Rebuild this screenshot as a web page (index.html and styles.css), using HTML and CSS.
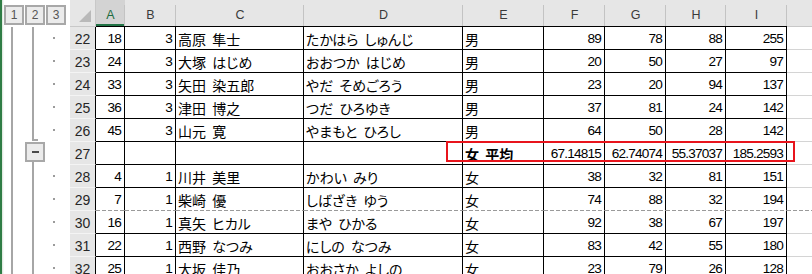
FILE: index.html
```html
<!DOCTYPE html>
<html lang="ja">
<head>
<meta charset="utf-8">
<title>Sheet</title>
<link rel="stylesheet" href="styles.css">
</head>
<body>
<div class="screen">
  <div class="outline">
    <div class="strip"></div>
    <div class="ocol">
      <div class="ohead"><span class="obtn">1</span></div>
      <div class="vline"></div>
    </div>
    <div class="ocol">
      <div class="ohead"><span class="obtn">2</span></div>
      <div class="seg-end"></div>
      <span class="obtn minus"><i></i></span>
      <div class="vline"></div>
    </div>
    <div class="ocol">
      <div class="ohead"><span class="obtn">3</span></div>
      <div class="dots">
        <span class="dot"></span><span class="dot"></span><span class="dot"></span><span class="dot"></span><span class="dot"></span>
        <span class="dot none"></span>
        <span class="dot"></span><span class="dot"></span><span class="dot"></span><span class="dot"></span><span class="dot"></span>
      </div>
    </div>
  </div>

  <div class="sheet">
    <div class="grid">
      <div class="row">
        <div class="corner"><span class="tri"></span></div>
        <div class="ch sel">A</div><div class="ch">B</div><div class="ch">C</div><div class="ch">D</div><div class="ch">E</div><div class="ch">F</div><div class="ch">G</div><div class="ch">H</div><div class="ch">I</div><div class="ch last"></div>
      </div>

      <div class="row">
        <div class="rh">22</div>
        <div class="c n">18</div><div class="c n">3</div><div class="c j">高原 隼士</div><div class="c j">たかはら しゅんじ</div><div class="c j">男</div><div class="c n">89</div><div class="c n">78</div><div class="c n">88</div><div class="c n">255</div><div class="x"></div>
      </div>
      <div class="row">
        <div class="rh">23</div>
        <div class="c n">24</div><div class="c n">3</div><div class="c j">大塚 はじめ</div><div class="c j">おおつか はじめ</div><div class="c j">男</div><div class="c n">20</div><div class="c n">50</div><div class="c n">27</div><div class="c n">97</div><div class="x"></div>
      </div>
      <div class="row">
        <div class="rh">24</div>
        <div class="c n">33</div><div class="c n">3</div><div class="c j">矢田 染五郎</div><div class="c j">やだ そめごろう</div><div class="c j">男</div><div class="c n">23</div><div class="c n">20</div><div class="c n">94</div><div class="c n">137</div><div class="x"></div>
      </div>
      <div class="row">
        <div class="rh">25</div>
        <div class="c n">36</div><div class="c n">3</div><div class="c j">津田 博之</div><div class="c j">つだ ひろゆき</div><div class="c j">男</div><div class="c n">37</div><div class="c n">81</div><div class="c n">24</div><div class="c n">142</div><div class="x"></div>
      </div>
      <div class="row">
        <div class="rh">26</div>
        <div class="c n">45</div><div class="c n">3</div><div class="c j">山元 寛</div><div class="c j">やまもと ひろし</div><div class="c j">男</div><div class="c n">64</div><div class="c n">50</div><div class="c n">28</div><div class="c n">142</div><div class="x"></div>
      </div>
      <div class="row">
        <div class="rh">27</div>
        <div class="c n"></div><div class="c n"></div><div class="c j"></div><div class="c j"></div><div class="c j b">女 平均</div><div class="c n">67.14815</div><div class="c n">62.74074</div><div class="c n">55.37037</div><div class="c n">185.2593</div><div class="x"></div>
      </div>
      <div class="row">
        <div class="rh">28</div>
        <div class="c n">4</div><div class="c n">1</div><div class="c j">川井 美里</div><div class="c j">かわい みり</div><div class="c j">女</div><div class="c n">38</div><div class="c n">32</div><div class="c n">81</div><div class="c n">151</div><div class="x"></div>
      </div>
      <div class="row pb">
        <div class="rh">29</div>
        <div class="c n">7</div><div class="c n">1</div><div class="c j">柴崎 優</div><div class="c j">しばざき ゆう</div><div class="c j">女</div><div class="c n">74</div><div class="c n">88</div><div class="c n">32</div><div class="c n">194</div><div class="x"></div>
      </div>
      <div class="row">
        <div class="rh">30</div>
        <div class="c n">16</div><div class="c n">1</div><div class="c j">真矢 ヒカル</div><div class="c j">まや ひかる</div><div class="c j">女</div><div class="c n">92</div><div class="c n">38</div><div class="c n">67</div><div class="c n">197</div><div class="x"></div>
      </div>
      <div class="row">
        <div class="rh">31</div>
        <div class="c n">22</div><div class="c n">1</div><div class="c j">西野 なつみ</div><div class="c j">にしの なつみ</div><div class="c j">女</div><div class="c n">83</div><div class="c n">42</div><div class="c n">55</div><div class="c n">180</div><div class="x"></div>
      </div>
      <div class="row">
        <div class="rh">32</div>
        <div class="c n">25</div><div class="c n">1</div><div class="c j">大坂 佳乃</div><div class="c j">おおさか よしの</div><div class="c j">女</div><div class="c n">23</div><div class="c n">79</div><div class="c n">26</div><div class="c n">128</div><div class="x"></div>
      </div>
    </div>
    <div class="hl"></div>
  </div>
</div>
</body>
</html>
```

FILE: styles.css
```css
* {
  box-sizing: border-box;
  margin: 0;
  padding: 0;
}

html, body {
  margin: 0;
  background: #ffffff;
  overflow: hidden;
}

body {
  font-family: "Liberation Sans", "Noto Sans CJK JP", sans-serif;
  color: #000;
}

.screen {
  display: flex;
  width: 812px;
  height: 274px;
  overflow: hidden;
}

/* ---------- outline (grouping) panel ---------- */
.outline {
  display: flex;
  width: 70px;
  flex: 0 0 70px;
  background: #ffffff;
}

.strip {
  width: 4px;
  flex: 0 0 4px;
  background: linear-gradient(to right, #2f7d45 0, #2f7d45 2px, #d8e4d8 2px, #ffffff 4px);
}

.ocol {
  display: flex;
  flex-direction: column;
  width: 21px;
  flex: 0 0 21px;
}

.ohead {
  height: 27px;
  flex: 0 0 27px;
  padding-top: 5px;
}

.obtn {
  display: flex;
  align-items: center;
  justify-content: center;
  width: 20px;
  height: 20px;
  border: 2px solid #a8a8a8;
  background: #ebebeb;
  color: #555;
  font-family: "Liberation Sans", sans-serif;
  font-size: 12px;
  line-height: 1;
}

.vline {
  flex: 1;
  width: 2px;
  margin-left: 7px;
  background: #a6a6a6;
}

.seg-end {
  height: 114px;
  flex: 0 0 114px;
  width: 6px;
  margin-left: 7px;
  border-left: 2px solid #a6a6a6;
  border-bottom: 2px solid #a6a6a6;
}

.minus {
  flex: 0 0 20px;
  margin-top: 1px;
}

.minus i {
  display: block;
  width: 7px;
  height: 2px;
  background: #4a4a4a;
}

.dots {
  display: flex;
  flex-direction: column;
}

.dot {
  display: block;
  height: 23px;
  flex: 0 0 23px;
}

.dot::before {
  content: "";
  display: block;
  width: 2px;
  height: 2px;
  margin: 10px 0 0 7px;
  background: #9b9b9b;
}

.dot.none::before {
  display: none;
}

/* ---------- sheet ---------- */
.sheet {
  position: relative;
  flex: 1;
  overflow: hidden;
}

.grid {
  display: grid;
  grid-template-columns: 26px 29px 51px 128px 159px 81px 61px 61px 60px 61px 40px;
  grid-template-rows: 27px repeat(11, 23px);
  width: 757px;
}

.row {
  display: contents;
}

.corner {
  position: relative;
  background: #e6e6e6;
  border-right: 1px solid #c8c8c8;
  border-bottom: 1px solid #c8c8c8;
}

.tri {
  position: absolute;
  right: 4px;
  bottom: 4px;
  width: 0;
  height: 0;
  border-left: 12px solid transparent;
  border-bottom: 12px solid #b9b9b9;
}

.ch {
  position: relative;
  display: flex;
  align-items: center;
  justify-content: center;
  padding-top: 4px;
  background: #e6e6e6;
  border-bottom: 1px solid #000;
  font-family: "Liberation Sans", sans-serif;
  font-size: 12.5px;
  color: #3a3a3a;
}

.ch::after {
  content: "";
  position: absolute;
  right: 0;
  top: 5px;
  bottom: 0;
  width: 1px;
  background: #c3c3c3;
}

.ch.sel {
  background: #d3d3d3;
  color: #1d6b3f;
  box-shadow: inset 0 -2px 0 #217346;
}

.ch.last {
  border-bottom-color: #c8c8c8;
}

.ch.last::after {
  display: none;
}

.rh {
  display: flex;
  align-items: center;
  justify-content: center;
  padding-top: 1px;
  background: #e6e6e6;
  border-right: 1px solid #000;
  border-bottom: 1px solid #f4f4f4;
  font-family: "Liberation Sans", sans-serif;
  font-size: 14px;
  color: #262626;
}

.c {
  display: flex;
  align-items: center;
  border-right: 1px solid #000;
  border-bottom: 1px solid #000;
  padding: 1px 3px 0 2px;
  white-space: nowrap;
  overflow: hidden;
}

.n {
  justify-content: flex-end;
  padding-right: 3px;
  font-family: "Liberation Sans", sans-serif;
  font-size: 13.6px;
  letter-spacing: -0.8px;
}

.j {
  justify-content: flex-start;
  font-family: "Noto Sans CJK JP", sans-serif;
  font-size: 14px;
  font-feature-settings: "palt";
  word-spacing: 3px;
}

.b {
  font-weight: 700;
}

.x {
  border-bottom: 1px solid #d4d4d4;
}

/* page-break row boundary */
.pb > .c,
.pb > .x {
  border-bottom-color: transparent;
  background: linear-gradient(to right, #9a9a9a 4px, transparent 4px) left bottom / 6px 1px repeat-x border-box;
}

/* red highlight rectangle drawn over the sheet */
.hl {
  position: absolute;
  left: 376px;
  top: 141px;
  width: 349px;
  height: 21px;
  border: 2px solid #e8141c;
}
```
